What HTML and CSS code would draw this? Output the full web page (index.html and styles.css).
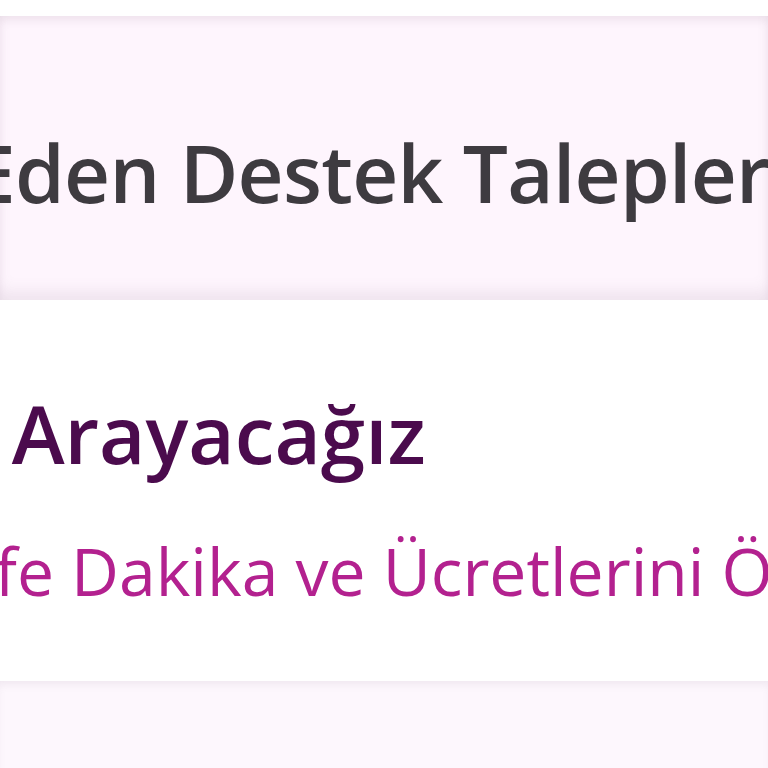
FILE: index.html
```html
<!DOCTYPE html>
<html lang="tr">
<head>
<meta charset="utf-8">
<link rel="stylesheet" href="styles.css">
</head>
<body>
<div class="page">
  <div class="top-gap"></div>
  <section class="band">
    <h2 class="band-title"><span class="clip-head">Eden Destek Talepleri</span></h2>
  </section>
  <section class="content">
    <h1 class="title"><span class="clip-title">Sizi </span>Arayacağız</h1>
    <p class="subtitle"><span class="clip-sub">Tari</span>fe Dakika ve Ücretlerini Öğrenin</p>
  </section>
  <section class="band band-bottom"></section>
</div>
</body>
</html>
```

FILE: styles.css
```css
html, body {
  margin: 0;
  padding: 0;
  background: #ffffff;
  overflow: hidden;
}
.page {
  width: 768px;
  height: 768px;
  overflow: hidden;
  font-family: "Open Sans", "Noto Sans", sans-serif;
  display: flex;
  flex-direction: column;
}
.top-gap {
  height: 16px;
  flex: none;
}
.band {
  flex: none;
  height: 284px;
  background: #fef5fd;
  box-shadow: inset 0 6px 10px -2px rgba(120, 90, 115, 0.12), inset 0 -12px 16px -4px rgba(120, 100, 120, 0.12);
  box-sizing: border-box;
  padding-top: 116px;
  white-space: nowrap;
}
.band-title {
  margin: 0;
  font-size: 80px;
  line-height: 1;
  font-weight: 600;
  letter-spacing: -0.7px;
  color: #3e3b40;
  margin-left: -29px;
}
.content {
  flex: none;
  height: 381px;
  box-sizing: border-box;
  padding-top: 93px;
  white-space: nowrap;
  background: #ffffff;
}
.title {
  margin: 0;
  font-size: 80px;
  line-height: 1;
  font-weight: 600;
  color: #4b0b4d;
  margin-left: -136px;
}
.subtitle {
  margin: 64px 0 0 0;
  font-size: 66px;
  line-height: 1;
  font-weight: 400;
  color: #b3218f;
  margin-left: -122px;
}
.band-bottom {
  height: 100px;
  background: #fdf7fd;
  padding: 0;
  box-shadow: inset 0 6px 8px -3px rgba(120, 90, 115, 0.10);
}
```
